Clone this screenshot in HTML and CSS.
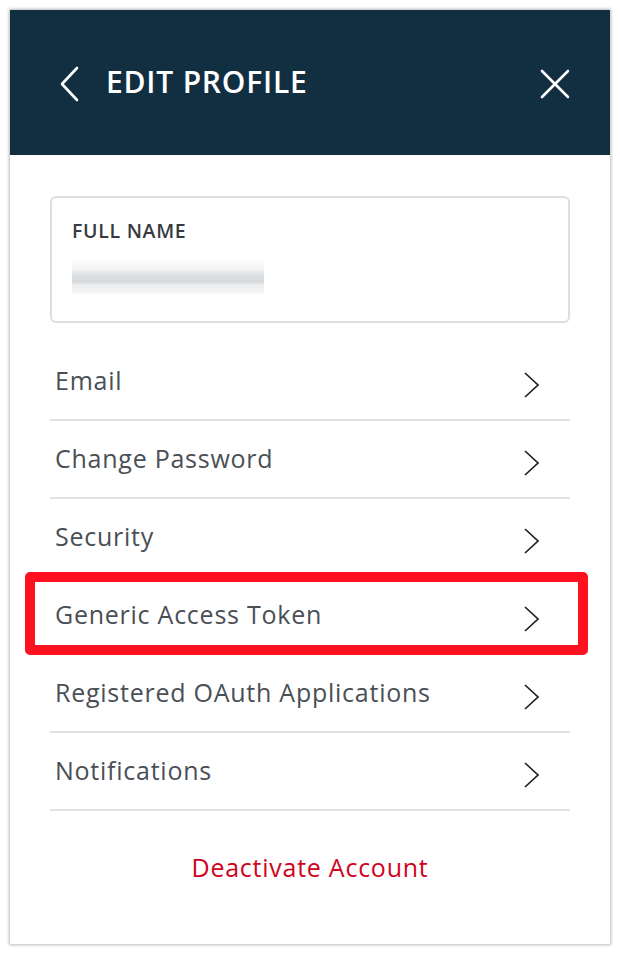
FILE: index.html
```html
<!DOCTYPE html>
<html lang="en">
<head>
<meta charset="utf-8">
<title>Edit Profile</title>
<link rel="stylesheet" href="styles.css">
</head>
<body>
<div class="panel">
  <header class="header">
    <div class="header-left">
      <svg class="back" width="20" height="36" viewBox="0 0 20 36"><path d="M18 2 L3 18 L18 34" fill="none" stroke="#fff" stroke-width="2.6" stroke-linecap="round" stroke-linejoin="round"/></svg>
      <h1 class="title">EDIT PROFILE</h1>
    </div>
    <svg class="close" width="30" height="30" viewBox="0 0 30 30"><path d="M2 2 L28 28 M28 2 L2 28" fill="none" stroke="#fff" stroke-width="2.6" stroke-linecap="round"/></svg>
  </header>
  <main class="content">
    <section class="name-card">
      <div class="label">FULL NAME</div>
      <div class="blurred" aria-label="hidden name"></div>
    </section>
    <ul class="menu">
      <li class="row"><span>Email</span><svg class="chev" width="18" height="26" viewBox="0 0 18 26"><path d="M2 1 L15 13 L2 25" fill="none" stroke="#1f1f1f" stroke-width="1.7"/></svg></li>
      <li class="row"><span>Change Password</span><svg class="chev" width="18" height="26" viewBox="0 0 18 26"><path d="M2 1 L15 13 L2 25" fill="none" stroke="#1f1f1f" stroke-width="1.7"/></svg></li>
      <li class="row"><span>Security</span><svg class="chev" width="18" height="26" viewBox="0 0 18 26"><path d="M2 1 L15 13 L2 25" fill="none" stroke="#1f1f1f" stroke-width="1.7"/></svg></li>
      <li class="row highlighted"><span>Generic Access Token</span><svg class="chev" width="18" height="26" viewBox="0 0 18 26"><path d="M2 1 L15 13 L2 25" fill="none" stroke="#1f1f1f" stroke-width="1.7"/></svg><div class="highlight"></div></li>
      <li class="row"><span>Registered OAuth Applications</span><svg class="chev" width="18" height="26" viewBox="0 0 18 26"><path d="M2 1 L15 13 L2 25" fill="none" stroke="#1f1f1f" stroke-width="1.7"/></svg></li>
      <li class="row"><span>Notifications</span><svg class="chev" width="18" height="26" viewBox="0 0 18 26"><path d="M2 1 L15 13 L2 25" fill="none" stroke="#1f1f1f" stroke-width="1.7"/></svg></li>
    </ul>
    <div class="deactivate">Deactivate Account</div>
  </main>
</div>
</body>
</html>
```
FILE: styles.css
```css
* { box-sizing: border-box; }
html, body { margin: 0; padding: 0; background: #fff; }
body {
  font-family: "Open Sans", "Liberation Sans", sans-serif;
  padding: 10px;
}
.panel {
  width: 600px;
  height: 934px;
  background: #fff;
  box-shadow: 0 0 3px 1px rgba(0,0,0,0.28);
}
.header {
  height: 145px;
  background: #122f42;
  display: flex;
  align-items: center;
  justify-content: space-between;
  padding: 0 40px 0 49px;
}
.header-left {
  display: flex;
  align-items: center;
  gap: 27px;
}
.back { display: block; margin-top: 2px; }
.title {
  margin: 0;
  color: #fff;
  font-size: 30px;
  font-weight: 600;
  letter-spacing: 0.8px;
  line-height: 1;
  margin-top: -2px;
}
.close { display: block; margin-top: 2px; }
.content {
  padding: 41px 40px 0;
}
.name-card {
  height: 127px;
  border: 2px solid #dcdfe2;
  border-radius: 6px;
  padding: 22px 20px 0;
}
.label {
  font-size: 19.5px;
  font-weight: 600;
  color: #353b41;
  letter-spacing: 0.7px;
  line-height: 22px;
}
.blurred {
  margin-top: 18px;
  width: 192px;
  height: 34px;
  background:
    linear-gradient(to bottom, #fcfcfc 0, #f3f4f5 9px, #e7e9eb 12px, #dcdfe2 16px, #d6d9dc 22px, #eceeef 25px, #f2f3f4 32px, #fff 34px);
  filter: blur(0.6px);
}
.menu {
  list-style: none;
  margin: 20px 0 0;
  padding: 0;
}
.row {
  position: relative;
  height: 78px;
  border-bottom: 2px solid #dfe2e5;
  display: flex;
  align-items: center;
  justify-content: space-between;
  padding: 0 29px 0 5px;
  font-size: 25px;
  color: #4a4f55;
  letter-spacing: 0.75px;
}
.row span { margin-top: -3px; }
.chev { display: block; margin-top: 8px; }
.highlight {
  position: absolute;
  top: -5px;
  bottom: -2px;
  left: -25px;
  right: -18px;
  border: 10px solid #ff1120;
  border-radius: 5px;
  pointer-events: none;
}
.deactivate {
  text-align: center;
  margin-top: 39px;
  font-size: 25px;
  color: #d0021b;
  letter-spacing: 0.75px;
}
```
